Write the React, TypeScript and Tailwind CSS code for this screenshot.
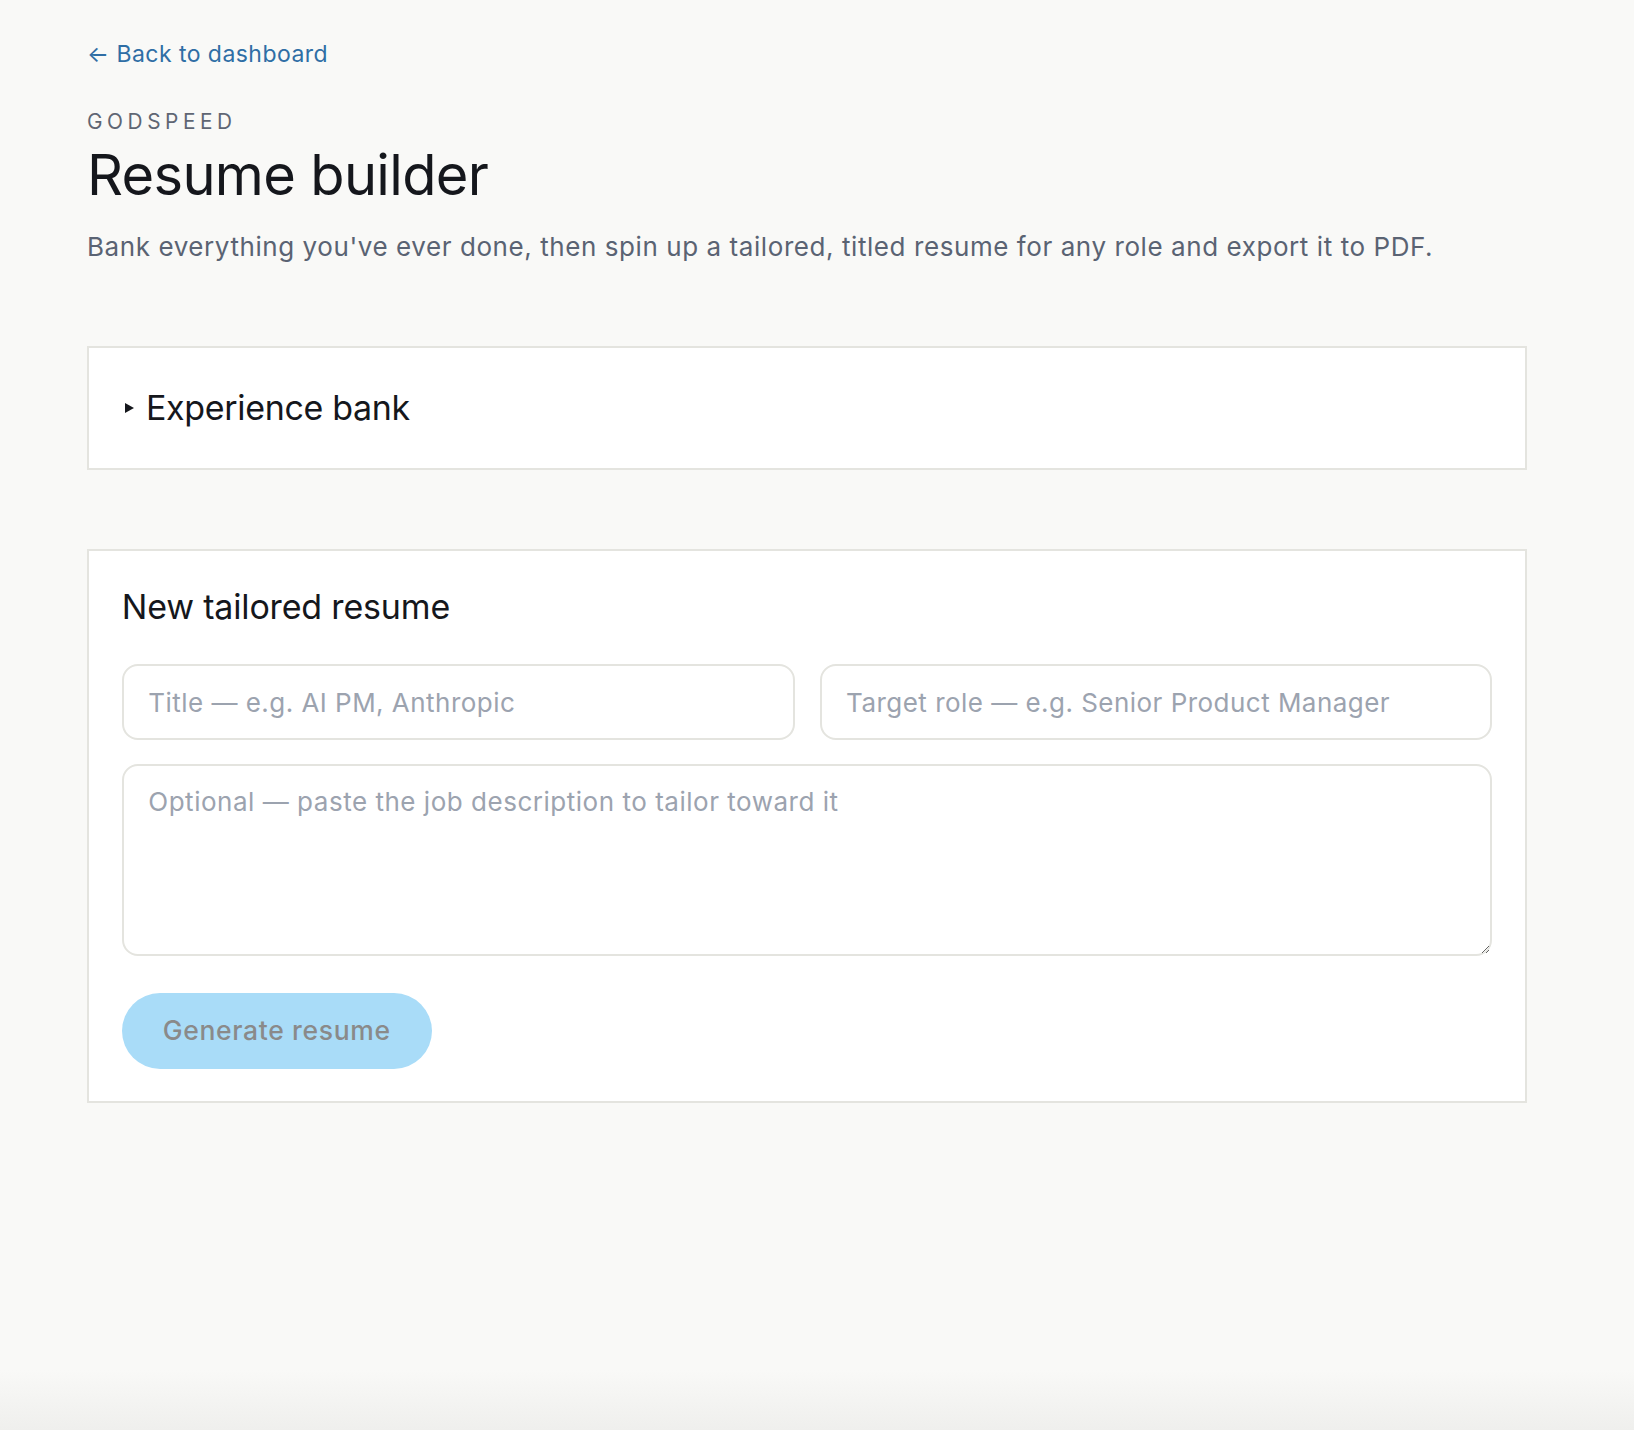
import React, { useState } from "react";

function Caret() {
  return (
    <svg width="9" height="10" viewBox="0 0 9 10" className="shrink-0">
      <path d="M0 0 L9 5 L0 10 Z" fill="#15171c" />
    </svg>
  );
}

export default function App() {
  const [title, setTitle] = useState("");
  const [role, setRole] = useState("");
  const [jd, setJd] = useState("");

  const canGenerate = title.trim() !== "" && role.trim() !== "";

  return (
    <div
      className="min-h-screen flex flex-col bg-[#f9f9f7] text-[#15171c]"
      style={{ fontFamily: "Inter, 'Noto Sans', sans-serif" }}
    >
      <div className="flex-1 pl-[87px] pt-[38px]">
        <div className="w-[1440px]">
          <a href="#" className="flex items-center gap-[7px] text-[23px] leading-[32px] tracking-[0.02em] text-[#2f6ea5] w-fit">
            <span>←</span>
            <span>Back to dashboard</span>
          </a>

          <div className="mt-[38px] text-[20.8px] leading-[28px] tracking-[0.22em] text-[#5f6673]">GODSPEED</div>
          <h1 className="mt-[5px] text-[56px] leading-[68px] font-normal tracking-[-0.012em] text-[#15171c]">
            Resume builder
          </h1>
          <p className="mt-[19px] text-[26px] leading-[38px] tracking-[0.022em] text-[#5a6373]">
            Bank everything you've ever done, then spin up a tailored, titled resume for any role and export it to PDF.
          </p>

          <div className="mt-[80px] bg-white border-2 border-[#e4e4df] h-[124px] flex items-center pl-[36px]">
            <button className="flex items-center gap-[12px]">
              <Caret />
              <span className="text-[34px] leading-[48px] tracking-[-0.01em]">Experience bank</span>
            </button>
          </div>

          <div className="mt-[79px] bg-white border-2 border-[#e4e4df] pt-[32px] pb-[32px] px-[32.7px]">
            <h2 className="text-[34px] leading-[48px] font-normal tracking-[-0.005em]">New tailored resume</h2>
            <div className="mt-[33px] grid grid-cols-2 gap-[25px]">
              <input
                value={title}
                onChange={e => setTitle(e.target.value)}
                placeholder="Title — e.g. AI PM, Anthropic"
                className="h-[76px] rounded-[16px] border-2 border-[#e4e4df] px-[24.6px] text-[26px] tracking-[0.018em] outline-none placeholder:text-[#9ca3af]"
              />
              <input
                value={role}
                onChange={e => setRole(e.target.value)}
                placeholder="Target role — e.g. Senior Product Manager"
                className="h-[76px] rounded-[16px] border-2 border-[#e4e4df] px-[24.6px] text-[26px] tracking-[0.018em] outline-none placeholder:text-[#9ca3af]"
              />
            </div>
            <textarea
              value={jd}
              onChange={e => setJd(e.target.value)}
              placeholder="Optional — paste the job description to tailor toward it"
              className="block mt-[24px] w-full h-[192px] rounded-[16px] border-2 border-[#e4e4df] px-[24.6px] py-[16px] text-[26px] leading-[40px] tracking-[0.02em] outline-none placeholder:text-[#9ca3af]"
            />
            <button
              disabled={!canGenerate}
              className="mt-[37px] h-[76px] px-[41px] rounded-full bg-[#a9dcf8] text-[26.5px] tracking-[0.025em] font-medium text-[#8a8a8a]"
            >
              Generate resume
            </button>
          </div>
        </div>
      </div>
      <div className="h-[60px] bg-gradient-to-b from-[#f9f9f7] to-[#efefed]" />
    </div>
  );
}
